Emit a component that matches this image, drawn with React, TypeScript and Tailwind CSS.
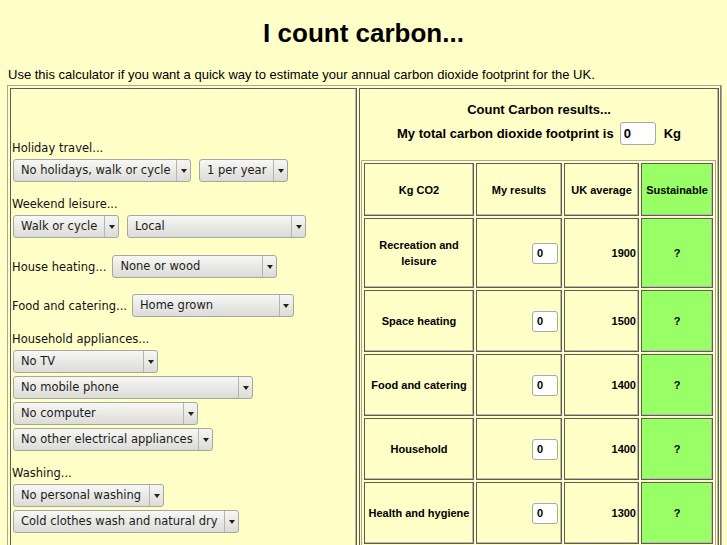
import React from "react";

const SANS = "font-['Liberation_Sans',Arial,sans-serif]";
const DEJAVU = "font-['DejaVu_Sans',sans-serif]";

function Select({ label, w }: { label: string; w: string }) {
  return (
    <div
      className={`flex h-[23px] shrink-0 items-center rounded-[3px] border border-[#a6a6a2] bg-gradient-to-b from-[#f7f7f5] to-[#dbdbd7] text-[11.5px] text-[#1c1c1c] ${DEJAVU} ${w}`}
    >
      <span className="flex-1 truncate pl-[7px]">{label}</span>
      <span className="flex h-full w-[14px] items-center justify-center border-l border-[#b4b4b0]">
        <span className="h-0 w-0 border-x-[3px] border-t-[4px] border-x-transparent border-t-[#222]" />
      </span>
    </div>
  );
}

function Label({ children, className = "" }: { children: React.ReactNode; className?: string }) {
  return (
    <div className={`ml-[1px] h-[14px] text-[11.5px] leading-[14px] text-[#111] ${DEJAVU} ${className}`}>
      {children}
    </div>
  );
}

function SmallInput() {
  return (
    <input
      readOnly
      value="0"
      className="h-[21px] w-[26px] rounded-[3px] border border-[#a8a8a8] bg-white pl-[4px] text-[11px] font-bold text-black outline-none"
    />
  );
}

const rows = [
  { name: "Recreation and leisure", avg: "1900", h: "h-[70px]" },
  { name: "Space heating", avg: "1500", h: "h-[62px]" },
  { name: "Food and catering", avg: "1400", h: "h-[62px]" },
  { name: "Household", avg: "1400", h: "h-[62px]" },
  { name: "Health and hygiene", avg: "1300", h: "h-[62px]" },
];

const cell = "border border-[#5e5e58] shadow-[inset_-1px_-1px_0_#b8b8a8]";

export default function App() {
  return (
    <div className={`min-h-[545px] w-[727px] overflow-hidden bg-[#ffffc8] text-black ${SANS}`}>
      <h1 className="pt-[19px] text-center text-[26px] font-bold leading-[28px]">I count carbon...</h1>
      <p className="mt-[20px] pl-[8px] text-[13px] leading-[15px]">
        Use this calculator if you want a quick way to estimate your annual carbon dioxide footprint for the UK.
      </p>

      <div className="ml-[7px] mt-[3px] flex w-[715px] gap-[2px] border border-[#a8a89a] p-[2px] shadow-[inset_-1px_-1px_0_#7a7a70]">
        {/* left: questions */}
        <div className={`w-[347px] shrink-0 pt-[52px] pb-[20px] ${cell}`}>
          <Label>Holiday travel...</Label>
          <div className="ml-[2px] mt-[4px] flex gap-[8px]">
            <Select label="No holidays, walk or cycle" w="w-[178px]" />
            <Select label="1 per year" w="w-[89px]" />
          </div>

          <Label className="mt-[15px]">Weekend leisure...</Label>
          <div className="ml-[2px] mt-[4px] flex gap-[8px]">
            <Select label="Walk or cycle" w="w-[106px]" />
            <Select label="Local" w="w-[179px]" />
          </div>

          <div className="mt-[17px] flex items-center gap-[6px]">
            <Label>House heating...</Label>
            <Select label="None or wood" w="w-[165px]" />
          </div>

          <div className="mt-[16px] flex items-center gap-[5px]">
            <Label>Food and catering...</Label>
            <Select label="Home grown" w="w-[162px]" />
          </div>

          <Label className="mt-[15px]">Household appliances...</Label>
          <div className="ml-[2px] mt-[4px] flex flex-col gap-[3px]">
            <Select label="No TV" w="w-[145px]" />
            <Select label="No mobile phone" w="w-[240px]" />
            <Select label="No computer" w="w-[185px]" />
            <Select label="No other electrical appliances" w="w-[200px]" />
          </div>

          <Label className="mt-[15px]">Washing...</Label>
          <div className="ml-[2px] mt-[4px] flex flex-col gap-[3px]">
            <Select label="No personal washing" w="w-[151px]" />
            <Select label="Cold clothes wash and natural dry" w="w-[226px]" />
          </div>
        </div>

        {/* right: results */}
        <div className={`w-[360px] shrink-0 pt-[13px] ${cell}`}>
          <div className="text-center text-[13px] font-bold leading-[16px]">Count Carbon results...</div>
          <div className="mt-[4px] flex items-center justify-center gap-[6px] text-[13px] font-bold">
            <span>My total carbon dioxide footprint is</span>
            <input
              readOnly
              value="0"
              className="h-[23px] w-[36px] rounded-[3px] border border-[#a8a8a8] bg-white pl-[3px] text-[13px] font-bold outline-none"
            />
            <span className="ml-[2px]">Kg</span>
          </div>

          <table className="ml-[1px] mt-[15px] w-[355px] border-separate border-spacing-[2px] border border-[#a8a89a] text-[11px] font-bold leading-[16px]">
            <tbody>
              <tr className="h-[53px]">
                <td className={`w-[110px] text-center ${cell}`}>Kg CO2</td>
                <td className={`w-[86px] text-center ${cell}`}>My results</td>
                <td className={`w-[75px] text-center ${cell}`}>UK average</td>
                <td className={`w-[72px] bg-[#99ff66] text-center ${cell}`}>Sustainable</td>
              </tr>
              {rows.map((r) => (
                <tr key={r.name} className={r.h}>
                  <td className={`px-[3px] text-center ${cell}`}>{r.name}</td>
                  <td className={`pr-[3px] text-right ${cell}`}>
                    <SmallInput />
                  </td>
                  <td className={`pr-[2px] text-right ${cell}`}>{r.avg}</td>
                  <td className={`bg-[#99ff66] text-center ${cell}`}>?</td>
                </tr>
              ))}
            </tbody>
          </table>
        </div>
      </div>
    </div>
  );
}
